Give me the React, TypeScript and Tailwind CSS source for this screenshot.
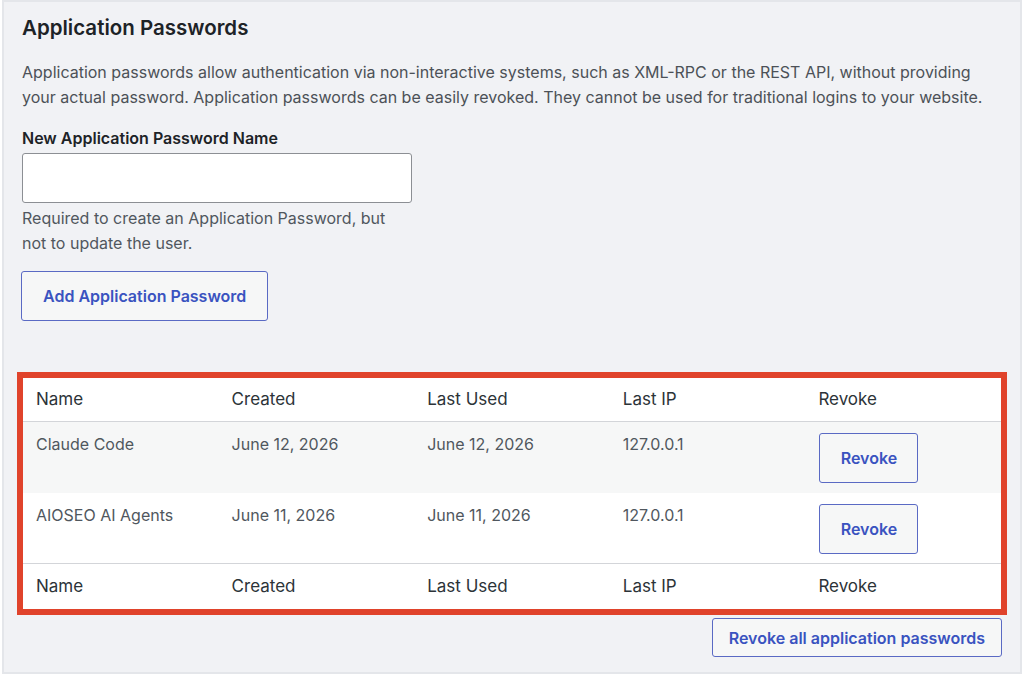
const rows = [
  { name: 'Claude Code', created: 'June 12, 2026', lastUsed: 'June 12, 2026', ip: '127.0.0.1' },
  { name: 'AIOSEO AI Agents', created: 'June 11, 2026', lastUsed: 'June 11, 2026', ip: '127.0.0.1' },
]

const cols = ['Name', 'Created', 'Last Used', 'Last IP', 'Revoke']

const HeadRow = ({ border }: { border: 'top' | 'bottom' }) => (
  <tr className={border === 'bottom' ? 'border-b border-[#d3d5d9]' : 'border-t border-[#d3d5d9]'}>
    {cols.map((c) => (
      <th
        key={c}
        className={`${border === 'bottom' ? 'h-[43px]' : 'h-[46px]'} px-[13px] text-left align-middle text-[17px] font-normal text-[#2c3338]`}
      >
        {c}
      </th>
    ))}
  </tr>
)

export default function App() {
  return (
    <div className="h-[676px] w-[1024px] bg-white" style={{ fontFamily: 'Inter, "Noto Sans", sans-serif' }}>
      <div className="ml-[2px] h-[674px] w-[1020px] border-2 border-[#e4e6ea] bg-[#f1f2f5] pl-[18px] pr-[16px]">
        <div className="w-[980px]">
          <h2 className="pt-[12px] text-[20.5px] font-semibold leading-[28px] text-[#1d2327]">Application Passwords</h2>
          <p className="mt-[18px] text-[16px] leading-[25px] text-[#4c5157]">
            Application passwords allow authentication via non-interactive systems, such as XML-RPC or the REST API, without providing
            your actual password. Application passwords can be easily revoked. They cannot be used for traditional logins to your website.
          </p>
          <label className="mt-[16px] block text-[16px] font-semibold leading-[24px] text-[#1d2327]">New Application Password Name</label>
          <input className="mt-[3px] block h-[50px] w-[390px] rounded-[3px] border border-[#8c8f94] bg-white" />
          <p className="mt-[3px] w-[390px] text-[16px] leading-[25px] text-[#50575e]">
            Required to create an Application Password, but not to update the user.
          </p>
          <button className="ml-[-1px] mt-[15px] h-[50px] rounded-[3px] border border-[#5a6ac4] bg-[#f6f7f7] px-[21px] text-[16px] font-semibold text-[#3a53c0]">
            Add Application Password
          </button>

          <div className="mx-[-5px] mt-[51px] border-[6px] border-[#e0432b] bg-white">
            <table className="w-full table-fixed border-collapse">
              <thead>
                <HeadRow border="bottom" />
              </thead>
              <tbody>
                {rows.map((r, i) => (
                  <tr key={r.name} className={i === 0 ? 'bg-[#f6f7f7]' : 'bg-white'}>
                    <td className={`${i === 0 ? 'h-[72px]' : 'h-[70px]'} px-[13px] pt-[10px] align-top text-[16px] leading-[25px] text-[#50575e]`}>{r.name}</td>
                    <td className="px-[13px] pt-[10px] align-top text-[16px] leading-[25px] text-[#50575e]">{r.created}</td>
                    <td className="px-[13px] pt-[10px] align-top text-[16px] leading-[25px] text-[#50575e]">{r.lastUsed}</td>
                    <td className="px-[13px] pt-[10px] align-top text-[16px] leading-[25px] text-[#50575e]">{r.ip}</td>
                    <td className="px-[13px] pt-[11px] align-top">
                      <button className="ml-[1px] h-[50px] w-[99px] rounded-[3px] border border-[#5a6ac4] bg-[#f6f7f7] text-[16px] font-semibold text-[#3a53c0]">
                        Revoke
                      </button>
                    </td>
                  </tr>
                ))}
              </tbody>
              <tfoot>
                <HeadRow border="top" />
              </tfoot>
            </table>
          </div>

          <div className="mt-[3px] flex justify-end">
            <button className="h-[39px] rounded-[3px] border border-[#5a6ac4] bg-[#f6f7f7] px-[16px] text-[16px] font-semibold text-[#3a53c0]">
              Revoke all application passwords
            </button>
          </div>
        </div>
      </div>
    </div>
  )
}
